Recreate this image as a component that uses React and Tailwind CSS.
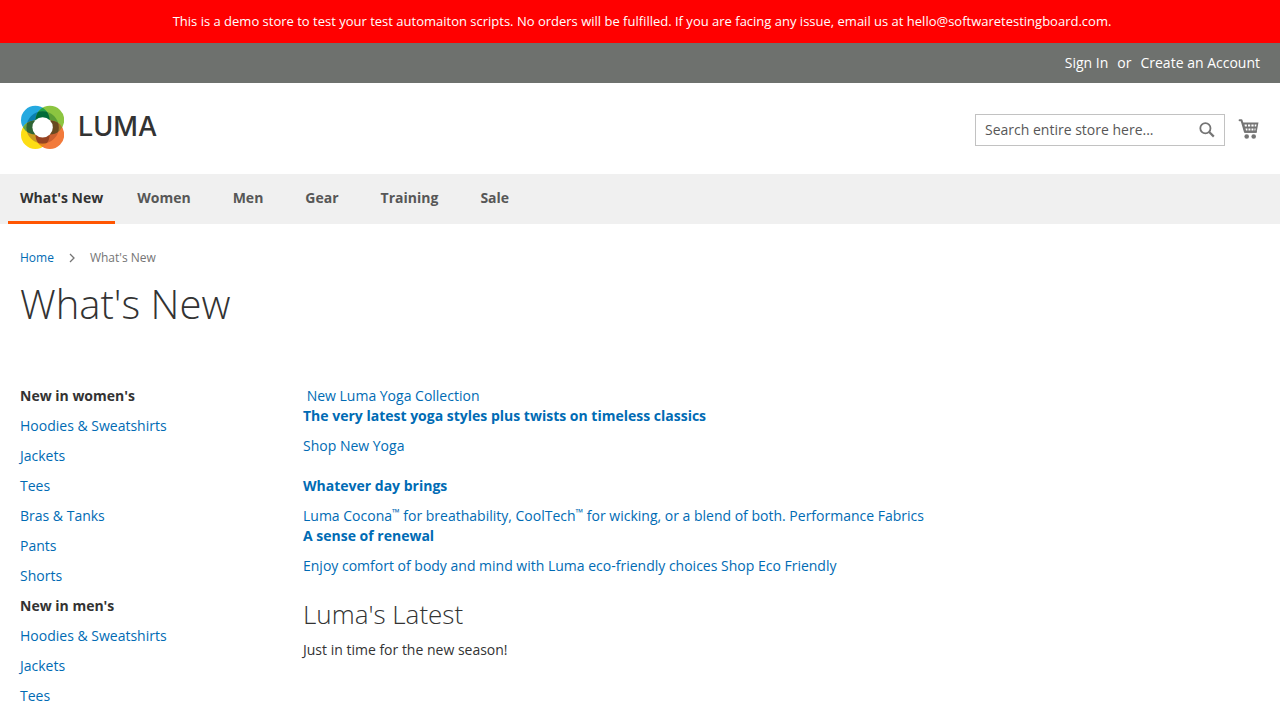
const navItems = [
  { label: "Women" },
  { label: "Men" },
  { label: "Gear" },
  { label: "Training" },
  { label: "Sale" },
];

const categories = [
  {
    title: "New in women's",
    links: ["Hoodies & Sweatshirts", "Jackets", "Tees", "Bras & Tanks", "Pants", "Shorts"],
  },
  {
    title: "New in men's",
    links: ["Hoodies & Sweatshirts", "Jackets", "Tees"],
  },
];

function LogoMark() {
  return (
    <svg viewBox="-0.6 -0.4 44 44" className="size-11" aria-hidden="true">
      <defs>
        <clipPath id="tl"><circle cx="14.7" cy="14.7" r="14.3" /></clipPath>
        <clipPath id="tr"><circle cx="29.3" cy="14.7" r="14.3" /></clipPath>
        <clipPath id="bl"><circle cx="14.7" cy="29.3" r="14.3" /></clipPath>
        <clipPath id="br"><circle cx="29.3" cy="29.3" r="14.3" /></clipPath>
        <clipPath id="ring"><circle cx="22" cy="22" r="16.2" /></clipPath>
      </defs>
      <circle cx="14.7" cy="14.7" r="14.3" fill="#25a9e0" />
      <circle cx="29.3" cy="14.7" r="14.3" fill="#8cc540" />
      <circle cx="14.7" cy="29.3" r="14.3" fill="#fddd15" />
      <circle cx="29.3" cy="29.3" r="14.3" fill="#f27a3b" />
      {/* Where two neighbouring discs overlap, outside the ring */}
      <circle cx="29.3" cy="14.7" r="14.3" fill="#1fa04a" clipPath="url(#tl)" />
      <circle cx="14.7" cy="29.3" r="14.3" fill="#5fa444" clipPath="url(#tl)" />
      <circle cx="29.3" cy="29.3" r="14.3" fill="#a5802c" clipPath="url(#tr)" />
      <circle cx="29.3" cy="29.3" r="14.3" fill="#e8841f" clipPath="url(#bl)" />
      {/* Ring over each single disc */}
      <circle cx="22" cy="22" r="16.2" fill="#0a7fae" clipPath="url(#tl)" />
      <circle cx="22" cy="22" r="16.2" fill="#5a9e35" clipPath="url(#tr)" />
      <circle cx="22" cy="22" r="16.2" fill="#c89a20" clipPath="url(#bl)" />
      <circle cx="22" cy="22" r="16.2" fill="#cc602f" clipPath="url(#br)" />
      {/* Ring over each overlap */}
      <g clipPath="url(#ring)">
        <circle cx="29.3" cy="14.7" r="14.3" fill="#006b38" clipPath="url(#tl)" />
        <circle cx="14.7" cy="29.3" r="14.3" fill="#2f6535" clipPath="url(#tl)" />
        <circle cx="29.3" cy="29.3" r="14.3" fill="#684a20" clipPath="url(#tr)" />
        <circle cx="29.3" cy="29.3" r="14.3" fill="#964321" clipPath="url(#bl)" />
      </g>
      <circle cx="22" cy="22" r="10.2" fill="#fff" />
    </svg>
  );
}

function SearchIcon() {
  return (
    <svg viewBox="0 0 16 16" className="size-4" fill="none" stroke="#757575" aria-hidden="true">
      <circle cx="6.4" cy="6.2" r="5.1" strokeWidth="1.8" />
      <path d="M10.2 10 L14.8 14.6" strokeWidth="2.2" />
    </svg>
  );
}

function CartIcon() {
  return (
    <svg viewBox="0.7 0.5 22 22" className="size-[22px]" aria-hidden="true">
      <path d="M2.3 1.8 H4.2 L7.6 13.2 H18.6" fill="none" stroke="#757575" strokeWidth="2" strokeLinecap="round" strokeLinejoin="round" />
      <path d="M4.8 4 H21.2 L19.2 14.2 H7.2 Z" fill="#757575" />
      <path d="M7.2 6h2.3v2H7.6z M10.7 6h2.2v2h-2.2z M14.1 6h2.2v2h-2.2z M17.4 6h1.8l-.4 2h-1.4z M8.2 9.9h1.9v2H8.7z M11.2 9.9h1.9v2h-1.9z M14.2 9.9h1.9v2h-1.9z M17.2 9.9h1.2l-.4 2h-.8z" fill="#fff" />
      <circle cx="9.4" cy="18" r="2.3" fill="#757575" />
      <circle cx="16.4" cy="18" r="2.3" fill="#757575" />
    </svg>
  );
}

export default function App() {
  return (
    <div className="bg-white font-['Open_Sans',sans-serif] text-sm leading-5 text-[#333]">
      <div className="bg-[#ff0000] py-3 pl-1 text-center text-[13px] leading-[19px] text-white">
        This is a demo store to test your test automaiton scripts. No orders will be fulfilled. If you are facing any
        issue, email us at hello@softwaretestingboard.com.
      </div>

      <header>
        <div className="flex h-10 items-center justify-end bg-[#6e716e] px-5 text-white">
          <a href="#signin">Sign In</a>
          <span className="px-[9px]">or</span>
          <a href="#create">Create an Account</a>
        </div>

        <div className="flex h-[91px] items-start justify-between px-5 pt-[22px]">
          <a href="#home" className="flex items-center gap-[14px]" aria-label="Luma home">
            <LogoMark />
            <span className="font-['Inter',sans-serif] text-[27px] leading-[44px] font-medium">LUMA</span>
          </a>
          <div className="flex items-center gap-[13px] pt-[9px]">
            <form role="search" className="flex h-8 w-[250px] items-center border border-[#c2c2c2] px-[9px]">
              <input
                type="search"
                aria-label="Search"
                placeholder="Search entire store here..."
                className="min-w-0 flex-1 bg-transparent outline-none placeholder:text-[#575757]"
              />
              <button type="button" aria-label="Search">
                <SearchIcon />
              </button>
            </form>
            <a href="#cart" aria-label="My Cart">
              <CartIcon />
            </a>
          </div>
        </div>
      </header>

      <nav className="flex h-[50px] gap-[10px] bg-[#f0f0f0] px-2 font-bold text-[#575757]">
        <a href="#new" className="border-b-3 border-[#ff5501] px-3 leading-[47px] text-[#333]">
          What's New
        </a>
        {navItems.map((item) => (
          <a key={item.label} href={"#" + item.label} className="pr-5 pl-3 leading-[47px]">
            {item.label}
          </a>
        ))}
      </nav>

      <div className="px-5">
        <nav aria-label="Breadcrumb" className="flex items-center gap-[14px] pt-[25px] text-xs leading-[18px] text-[#757575]">
          <a href="#home" className="text-[#006bb4]">Home</a>
          <svg viewBox="0 0 8 10" className="h-[10px] w-2" fill="none" stroke="#757575" strokeWidth="1.3" aria-hidden="true">
            <path d="M2 1 L6 5 L2 9" />
          </svg>
          <span>What's New</span>
        </nav>

        <h1 className="pt-3 text-[40px] leading-[50px] font-light">What's New</h1>

        <div className="flex pt-[57px]">
          <aside className="w-[283px] shrink-0">
            {categories.map((group) => (
              <section key={group.title}>
                <h2 className="pb-[10px] font-bold">{group.title}</h2>
                <ul>
                  {group.links.map((link) => (
                    <li key={link} className="pb-[10px]">
                      <a href="#category" className="text-[#006bb4]">{link}</a>
                    </li>
                  ))}
                </ul>
              </section>
            ))}
          </aside>

          <main className="min-w-0 flex-1">
            <a href="#yoga" className="block pb-5 text-[#006bb4]">
              <span className="block">&nbsp;New Luma Yoga Collection</span>
              <strong className="block pb-[10px]">The very latest yoga styles plus twists on timeless classics</strong>
              <span className="block">Shop New Yoga</span>
            </a>
            <a href="#performance" className="block text-[#006bb4]">
              <strong className="block pb-[10px]">Whatever day brings</strong>
              <span className="block">
                Luma Cocona<sup className="text-[10px]">™</sup> for breathability, CoolTech
                <sup className="text-[10px]">™</sup> for wicking, or a blend of both. Performance Fabrics
              </span>
            </a>
            <a href="#eco" className="block text-[#006bb4]">
              <strong className="block pb-[10px]">A sense of renewal</strong>
              <span className="block">Enjoy comfort of body and mind with Luma eco-friendly choices Shop Eco Friendly</span>
            </a>
            <h2 className="pt-6 text-[26px] leading-7 font-light">Luma's Latest</h2>
            <p className="pt-3">Just in time for the new season!</p>
          </main>
        </div>
      </div>
    </div>
  );
}
